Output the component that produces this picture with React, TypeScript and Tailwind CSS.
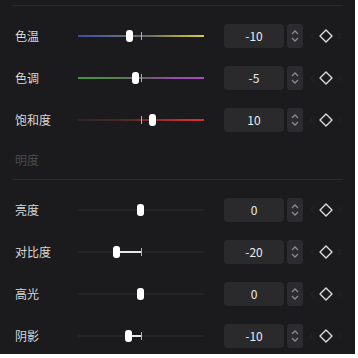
import React from 'react';

type Row = {
  label: string;
  value: string;
  thumb: number;
  track: string;
  bar?: boolean;
};

const TICK = 63;

const top: Row[] = [
  { label: '色温', value: '-10', thumb: 48, track: 'bg-[linear-gradient(90deg,#3a4ca8_0%,#5d6590_30%,#6a6a6a_55%,#b8b040_85%,#d6cc3c_100%)] h-[2px]' },
  { label: '色调', value: '-5', thumb: 54, track: 'bg-[linear-gradient(90deg,#3f9a3a_0%,#5d7d58_30%,#6a5c70_55%,#9a4cb0_80%,#a24cc0_100%)] h-[2px]' },
  { label: '饱和度', value: '10', thumb: 71, track: 'bg-[linear-gradient(90deg,#2a2626_0%,#4a2a2a_35%,#8a2a2a_60%,#c83030_85%,#d43232_100%)] h-[2px]' },
];

const bottom: Row[] = [
  { label: '亮度', value: '0', thumb: 59, track: 'bg-[#2e2e30] h-px' },
  { label: '对比度', value: '-20', thumb: 35, track: 'bg-[#2e2e30] h-px', bar: true },
  { label: '高光', value: '0', thumb: 59, track: 'bg-[#2e2e30] h-px' },
  { label: '阴影', value: '-10', thumb: 47, track: 'bg-[#2e2e30] h-px', bar: true },
];

function Slider({ row }: { row: Row }) {
  return (
    <div className="relative w-[126px] h-[14px] shrink-0">
      <div className={`absolute left-0 right-0 top-1/2 -translate-y-1/2 ${row.track}`} />
      {row.bar && (
        <div
          className="absolute top-1/2 -translate-y-1/2 h-[2px] bg-[#e8e8e8]"
          style={{ left: row.thumb + 4, width: TICK - row.thumb - 4 }}
        />
      )}
      <div className="absolute top-[3px] h-[8px] w-px bg-[#b0b0b0]" style={{ left: TICK }} />
      <div
        className="absolute top-[1px] w-[7px] h-[12px] rounded-[3px] bg-white"
        style={{ left: row.thumb }}
      />
    </div>
  );
}

function Keyframe() {
  return (
    <div className="flex items-center w-[40px] justify-center gap-[3px] ml-[3px] shrink-0">
      <svg width="5" height="8" viewBox="0 0 5 8">
        <path d="M4 1 L1 4 L4 7" fill="none" stroke="#242426" strokeWidth="1.2" />
      </svg>
      <svg width="16" height="16" viewBox="0 0 16 16">
        <path d="M8 2 L14 8 L8 14 L2 8 Z" fill="none" stroke="#dedede" strokeWidth="1.4" strokeLinejoin="round" />
      </svg>
      <svg width="5" height="8" viewBox="0 0 5 8">
        <path d="M1 1 L4 4 L1 7" fill="none" stroke="#242426" strokeWidth="1.2" />
      </svg>
    </div>
  );
}

function ParamRow({ row }: { row: Row }) {
  return (
    <div className="flex items-center h-[42px]">
      <div className="w-[78px] shrink-0 pl-[15px] text-[12px] text-[#d8d8d8]">{row.label}</div>
      <Slider row={row} />
      <div className="ml-[20px] w-[60px] shrink-0 h-[24px] rounded-[4px] bg-[#2a2a2d] flex items-center justify-center text-[12px] text-[#ececec]">
        {row.value}
      </div>
      <div className="ml-[3px] w-[16px] shrink-0 h-[24px] rounded-[3px] bg-[#2c2c30] flex flex-col items-center justify-center gap-[2px]">
        <svg width="8" height="5" viewBox="0 0 8 5">
          <path d="M1 4 L4 1 L7 4" fill="none" stroke="#8a8a8e" strokeWidth="1.3" />
        </svg>
        <svg width="8" height="5" viewBox="0 0 8 5">
          <path d="M1 1 L4 4 L7 1" fill="none" stroke="#8a8a8e" strokeWidth="1.3" />
        </svg>
      </div>
      <Keyframe />
    </div>
  );
}

export default function App() {
  return (
    <div className="w-[358px] h-[358px] bg-white" style={{ fontFamily: '"Noto Sans CJK SC", "Noto Sans", sans-serif' }}>
      <div className="w-[355px] h-[354px] bg-[#1b1b1d] overflow-hidden">
        <div className="mt-[5px] mx-[12px] h-px bg-[#2a2a2c]" />
        <div className="pt-[9px]">
          {top.map((r) => (
            <ParamRow key={r.label} row={r} />
          ))}
          <div className="flex items-center h-[38px]">
            <div className="pl-[15px] text-[12px] text-[#4a4a4c]">明度</div>
          </div>
          <div className="mx-[12px] h-px bg-[#2c2c2e]" />
          <div className="pt-[9px]">
            {bottom.map((r) => (
              <ParamRow key={r.label} row={r} />
            ))}
          </div>
        </div>
      </div>
    </div>
  );
}
